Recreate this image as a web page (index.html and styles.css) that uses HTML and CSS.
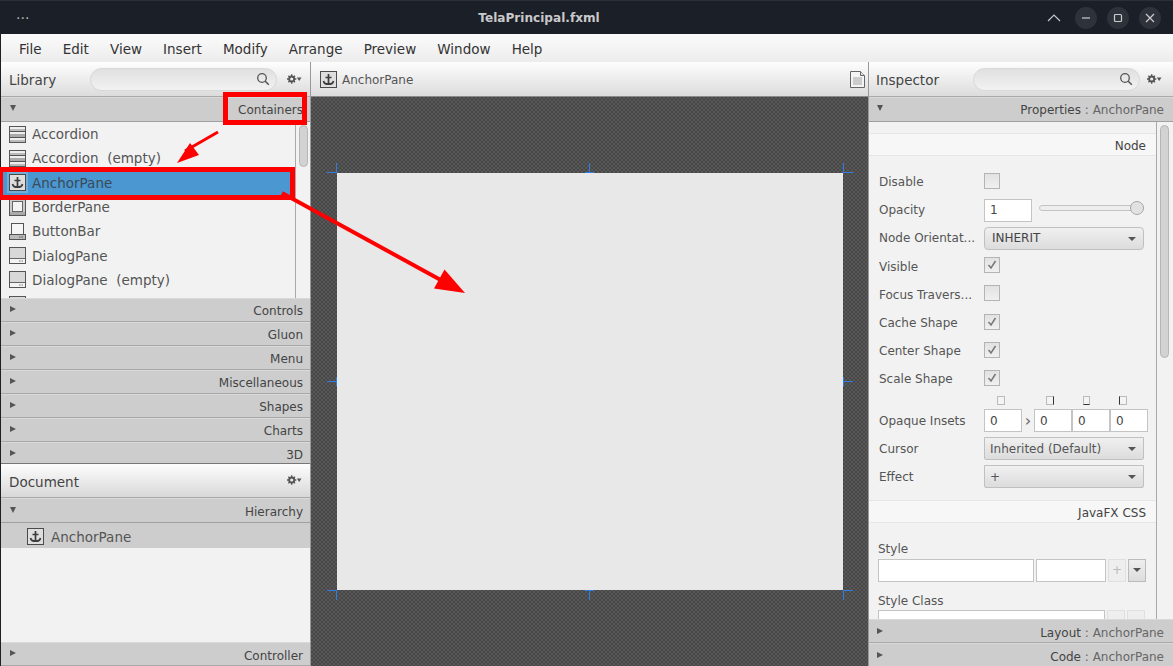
FILE: index.html
```html
<!DOCTYPE html>
<html lang="en">
<head>
<meta charset="utf-8">
<title>TelaPrincipal.fxml</title>
<link rel="stylesheet" href="styles.css">
</head>
<body>
<svg class="defs" width="0" height="0" aria-hidden="true">
  <defs>
    <g id="anchor">
      <rect x="0.5" y="0.5" width="16" height="16" fill="#dedede" stroke="#4a4a4a"/>
      <path d="M8.5 3v10M5.500 6.500h6M3.500 10c.5 2.500 2.500 3.200 5 3.200s4.500-.7 5-3.200" fill="none" stroke="#3c3c3c" stroke-width="1.700"/>
    </g>
    <g id="gear">
      <circle cx="5" cy="5" r="2.700" fill="none" stroke="#555" stroke-width="2"/>
      <path d="M5 0v2M5 8v2M0 5h2M8 5h2M1.500 1.500l1.400 1.400M7.100 7.100l1.400 1.400M1.500 8.500l1.400-1.400M7.100 2.900l1.400-1.400" stroke="#555" stroke-width="1.400"/>
      <path d="M10.500 3.500h5l-2.500 3.500z" fill="#555"/>
    </g>
    <g id="search">
      <circle cx="6" cy="6" r="4.300" fill="none" stroke="#555" stroke-width="1.300"/>
      <path d="M9.200 9.200l3.600 3.600" stroke="#555" stroke-width="1.600"/>
    </g>
    <g id="check">
      <path d="M4.500 8l2.500 3 4.500-7" fill="none" stroke="#777" stroke-width="1.500"/>
    </g>
    <g id="stack">
      <rect x="0.500" y="0.500" width="16" height="16" fill="#eee" stroke="#555"/>
      <rect x="1" y="3" width="15" height="2" fill="#bbb"/>
      <rect x="1" y="8" width="15" height="3" fill="#aaa"/>
      <rect x="1" y="14" width="15" height="2" fill="#bbb"/>
      <path d="M1 5.500h15M1 11.500h15" stroke="#555" fill="none"/>
    </g>
    <g id="border">
      <rect x="0.500" y="0.500" width="16" height="16" fill="#ccc" stroke="#555"/>
      <rect x="3.500" y="2.500" width="10" height="10" fill="#f4f4f4" stroke="#666"/>
      <rect x="1" y="13" width="15" height="3" fill="#aaa"/>
    </g>
    <g id="bar">
      <rect x="2.500" y="0.500" width="12" height="11" fill="#f6f6f6" stroke="#555"/>
      <rect x="0.500" y="11.500" width="16" height="5" fill="#bbb" stroke="#555"/>
      <path d="M10 14h1.500M12.500 14H14" stroke="#555"/>
    </g>
    <g id="dialog">
      <rect x="0.500" y="0.500" width="16" height="16" fill="#d8d8d8" stroke="#555"/>
      <rect x="1" y="12" width="15" height="4" fill="#f4f4f4"/>
      <path d="M1 11.500h15" stroke="#666"/>
      <path d="M10 14h1.500M12.500 14H14" stroke="#777"/>
    </g>
  </defs>
</svg>

<div class="app">
  <header class="titlebar">
    <span class="dots">···</span>
    <span class="wintitle">TelaPrincipal.fxml</span>
    <div class="winbtns">
      <svg class="chev" width="14" height="8" viewBox="0 0 14 8"><path d="M1 7l6-6 6 6" fill="none" stroke="#c8c8c8" stroke-width="1.200"/></svg>
      <span class="wbtn"><svg width="10" height="10" viewBox="0 0 10 10"><path d="M1 5h8" stroke="#ccc" stroke-width="1.200"/></svg></span>
      <span class="wbtn"><svg width="10" height="10" viewBox="0 0 10 10"><rect x="1.500" y="1.500" width="7" height="7" rx="1" fill="none" stroke="#ccc" stroke-width="1.200"/></svg></span>
      <span class="wbtn"><svg width="10" height="10" viewBox="0 0 10 10"><path d="M1 1l8 8M9 1l-8 8" stroke="#ccc" stroke-width="1.200"/></svg></span>
    </div>
  </header>

  <nav class="menubar">
    <span>File</span><span>Edit</span><span>View</span><span>Insert</span><span>Modify</span><span>Arrange</span><span>Preview</span><span>Window</span><span>Help</span>
  </nav>

  <main class="workspace">
    <aside class="left">
      <div class="panelhead">
        <span class="paneltitle">Library</span>
        <div class="searchbox"><svg width="14" height="14" viewBox="0 0 14 14"><use href="#search"/></svg></div>
        <svg class="gear" width="15" height="10" viewBox="0 0 16 10"><use href="#gear"/></svg>
      </div>
      <div class="acc open"><span class="tri down"></span><span class="acclabel">Containers</span></div>
      <div class="liblist">
        <div class="libitems">
          <div class="libitem"><svg width="17" height="17" viewBox="0 0 17 17"><use href="#stack"/></svg><span>Accordion</span></div>
          <div class="libitem"><svg width="17" height="17" viewBox="0 0 17 17"><use href="#stack"/></svg><span>Accordion&nbsp; (empty)</span></div>
          <div class="libitem selected"><svg width="17" height="17" viewBox="0 0 17 17"><use href="#anchor"/></svg><span>AnchorPane</span></div>
          <div class="libitem"><svg width="17" height="17" viewBox="0 0 17 17"><use href="#border"/></svg><span>BorderPane</span></div>
          <div class="libitem"><svg width="17" height="17" viewBox="0 0 17 17"><use href="#bar"/></svg><span>ButtonBar</span></div>
          <div class="libitem"><svg width="17" height="17" viewBox="0 0 17 17"><use href="#dialog"/></svg><span>DialogPane</span></div>
          <div class="libitem"><svg width="17" height="17" viewBox="0 0 17 17"><use href="#dialog"/></svg><span>DialogPane&nbsp; (empty)</span></div>
          <div class="libitem"><svg width="17" height="17" viewBox="0 0 17 17"><use href="#dialog"/></svg></div>
        </div>
        <div class="vscroll"><span class="thumb"></span></div>
      </div>
      <div class="acc"><span class="tri"></span><span class="acclabel">Controls</span></div>
      <div class="acc"><span class="tri"></span><span class="acclabel">Gluon</span></div>
      <div class="acc"><span class="tri"></span><span class="acclabel">Menu</span></div>
      <div class="acc"><span class="tri"></span><span class="acclabel">Miscellaneous</span></div>
      <div class="acc"><span class="tri"></span><span class="acclabel">Shapes</span></div>
      <div class="acc"><span class="tri"></span><span class="acclabel">Charts</span></div>
      <div class="acc short"><span class="tri"></span><span class="acclabel">3D</span></div>
      <div class="panelhead dochead">
        <span class="paneltitle">Document</span>
        <svg class="gear" width="15" height="10" viewBox="0 0 16 10"><use href="#gear"/></svg>
      </div>
      <div class="acc open hier"><span class="tri down"></span><span class="acclabel">Hierarchy</span></div>
      <div class="tree">
        <div class="treerow"><svg width="17" height="17" viewBox="0 0 17 17"><use href="#anchor"/></svg><span>AnchorPane</span></div>
      </div>
      <div class="acc foot"><span class="tri"></span><span class="acclabel">Controller</span></div>
    </aside>

    <section class="center">
      <div class="crumbs">
        <svg width="17" height="17" viewBox="0 0 17 17"><use href="#anchor"/></svg>
        <span class="crumb">AnchorPane</span>
        <svg class="docicon" width="15" height="17" viewBox="0 0 15 17"><path d="M.5.500h10l4 4v12H.5z" fill="#f4f4f4" stroke="#666"/><path d="M10.500.500v4h4" fill="#ddd" stroke="#666"/><rect x="3" y="6" width="9" height="8" fill="#ccc"/></svg>
      </div>
      <div class="stage">
        <div class="canvas">
          <i class="tick tl"></i><i class="tick tr"></i><i class="tick bl"></i><i class="tick br"></i>
          <i class="tick tm"></i><i class="tick bm"></i><i class="tick lm"></i><i class="tick rm"></i>
        </div>
      </div>
    </section>

    <aside class="right">
      <div class="panelhead insphead">
        <span class="paneltitle">Inspector</span>
        <div class="searchbox insp"><svg width="14" height="14" viewBox="0 0 14 14"><use href="#search"/></svg></div>
        <svg class="gear" width="15" height="10" viewBox="0 0 16 10"><use href="#gear"/></svg>
      </div>
      <div class="acc open"><span class="tri down"></span><span class="acclabel">Properties<em> : AnchorPane</em></span></div>
      <div class="props">
        <div class="propscroll">
          <div class="sechead">Node</div>
          <div class="grid">
            <label>Disable</label><div><span class="cb"></span></div>
            <label>Opacity</label><div class="opacity"><span class="field short">1</span><span class="slider"><i></i></span></div>
            <label>Node Orientat...</label><div><span class="select up">INHERIT<b></b></span></div>
            <label>Visible</label><div><span class="cb"><svg width="16" height="16" viewBox="0 0 16 16"><use href="#check"/></svg></span></div>
            <label>Focus Travers...</label><div><span class="cb"></span></div>
            <label>Cache Shape</label><div><span class="cb"><svg width="16" height="16" viewBox="0 0 16 16"><use href="#check"/></svg></span></div>
            <label>Center Shape</label><div><span class="cb"><svg width="16" height="16" viewBox="0 0 16 16"><use href="#check"/></svg></span></div>
            <label>Scale Shape</label><div><span class="cb"><svg width="16" height="16" viewBox="0 0 16 16"><use href="#check"/></svg></span></div>
          </div>
          <div class="insets">
            <div class="insetmarks"><i class="im t"></i><i class="im r"></i><i class="im b"></i><i class="im l"></i></div>
            <div class="insetrow">
              <label>Opaque Insets</label>
              <div class="insetfields"><span class="field">0</span><span class="gt">›</span><span class="field">0</span><span class="field">0</span><span class="field">0</span></div>
            </div>
          </div>
          <div class="grid lower">
            <label>Cursor</label><div><span class="select">Inherited (Default)<b></b></span></div>
            <label>Effect</label><div><span class="select">+<b></b></span></div>
          </div>
          <div class="sechead css">JavaFX CSS</div>
          <div class="cssblock">
            <label>Style</label>
            <div class="cssrow"><span class="cssfield wide"></span><span class="cssfield"></span><span class="mini off">+</span><span class="mini"><b></b></span></div>
            <label class="stylecls">Style Class</label>
            <div class="cssrow"><span class="cssfield wider"></span><span class="mini off"></span><span class="mini off"></span></div>
          </div>
        </div>
        <div class="vscroll"><span class="thumb"></span></div>
      </div>
      <div class="acc"><span class="tri"></span><span class="acclabel">Layout<em> : AnchorPane</em></span></div>
      <div class="acc last"><span class="tri"></span><span class="acclabel">Code<em> : AnchorPane</em></span></div>
    </aside>
  </main>

  <svg class="marks" width="1173" height="666" viewBox="0 0 1173 666" aria-hidden="true">
    <rect x="225.500" y="94.500" width="79" height="28" fill="none" stroke="#f00" stroke-width="5"/>
    <rect x="0.500" y="169.500" width="292" height="28" fill="none" stroke="#f00" stroke-width="5"/>
    <path d="M218 132L185 151" stroke="#f00" stroke-width="3"/>
    <path d="M177 163l13-20 9 12z" fill="#f00"/>
    <path d="M282 193L448 284" stroke="#f00" stroke-width="4"/>
    <path d="M465 293l-31-4.500 10.500-19z" fill="#f00"/>
  </svg>
</div>
</body>
</html>
```
FILE: styles.css
```css
* { box-sizing: border-box; }
html, body { margin: 0; padding: 0; }
body { font-family: "DejaVu Sans", sans-serif; color: #444; background: #1b1f27; }
.defs { position: absolute; }
.app { position: relative; width: 1173px; height: 666px; overflow: hidden; display: flex; flex-direction: column; }
.marks { position: absolute; left: 0; top: 0; pointer-events: none; }

.titlebar { height: 34px; flex: none; background: #1b1f27; display: flex; align-items: center; position: relative; padding: 0 12px 0 16px; border-top: 1px solid #2b2f36; }
.dots { color: #b8b8b8; font-size: 14px; }
.wintitle { position: absolute; left: 0; right: 95px; text-align: center; color: #c9c9cb; font-weight: bold; font-size: 12.100px; }
.winbtns { margin-left: auto; display: flex; align-items: center; gap: 10px; position: relative; }
.chev { margin-right: 4px; }
.wbtn { width: 22px; height: 22px; border-radius: 50%; background: #2e323a; display: flex; align-items: center; justify-content: center; }

.menubar { height: 28px; flex: none; background: linear-gradient(#fbfbfb, #ececec); display: flex; align-items: center; padding: 1px 0 0 18px; gap: 21.100px; font-size: 13.500px; color: #333; margin-left: 1px; }

.workspace { flex: 1; display: flex; min-height: 0; background: #f2f2f2; margin-left: 1px; }
.left { width: 310px; flex: none; display: flex; flex-direction: column; border-right: 1px solid #999; background: #f2f2f2; }
.right { flex: 1; min-width: 0; display: flex; flex-direction: column; border-left: 1px solid #999; background: #f2f2f2; }
.center { width: 557px; flex: none; display: flex; flex-direction: column; }

.panelhead { height: 35px; flex: none; display: flex; align-items: center; padding: 0 8px; background: linear-gradient(#fefefe, #dcdcdc); border-bottom: 1px solid #aaa; }
.insphead { padding: 0 11px 0 7px; }
.paneltitle { font-size: 13.500px; color: #444; margin-top: 2px; }
.searchbox { margin-left: auto; width: 187px; height: 23px; border: 1px solid #d8d8d8; border-radius: 12px; background: linear-gradient(#e0e0e0, #f2f2f2); display: flex; align-items: center; justify-content: flex-end; padding-right: 6px; }
.searchbox.insp { width: 167px; }
.gear { margin-left: 10px; flex: none; }
.insphead .gear { margin-left: 7px; }
.dochead { height: 34px; justify-content: space-between; background: linear-gradient(#fdfdfd, #d8d8d8); }
.dochead .gear { margin-top: -2px; }

.acc { height: 24px; flex: none; display: flex; align-items: center; justify-content: space-between; padding: 2px 7px 0 9px; background: #cdcdcd; border-bottom: 1px solid #a8a8a8; border-top: 1px solid #d9d9d9; font-size: 12px; }
.acc.open { height: 25px; padding-top: 0; border-bottom: 1px solid #a0a0a0; }
.acc.hier { padding-top: 2px; }
.acc.short { height: 22px; padding-top: 4px; border-bottom-color: #777; }
.acc.foot { padding-top: 3px; }
.acc.last { height: 23px; border-bottom: 0; }
.right .acc { padding-left: 8px; padding-right: 9px; }
.right .acc:not(.open) { padding-top: 4px; }
.acclabel em { font-style: normal; color: #666; }
.tri { width: 0; height: 0; border-style: solid; border-width: 3.500px 0 3.500px 6px; border-color: transparent transparent transparent #555; margin-top: -5px; }
.tri.down { border-width: 6px 3.500px 0; border-color: #555 transparent transparent; margin-top: -3px; }

.liblist { height: 176px; flex: none; display: flex; overflow: hidden; }
.libitems { flex: 1; min-width: 0; border-right: 1px solid #aaa; }
.libitem { height: 24.300px; display: flex; align-items: center; gap: 6px; padding-left: 8px; font-size: 13.500px; color: #555; }
.libitem svg { flex: none; }
.libitem.selected { background: #4a97d1; color: #3b4a55; }
.libitem.selected svg { box-shadow: 0 0 0 2px rgba(190, 215, 235, .35); }
.vscroll { width: 14px; flex: none; padding: 3px 2px 0 3px; }
.thumb { display: block; width: 9px; height: 42px; border-radius: 5px; background: #d2d2d2; border: 1px solid #b5b5b5; }

.tree { flex: 1; min-height: 0; background: #f2f2f2; }
.treerow { height: 25px; background: #cdcdcd; display: flex; align-items: center; gap: 7px; padding: 2px 0 0 26px; font-size: 13.500px; color: #555; }

.crumbs { height: 35px; flex: none; display: flex; align-items: center; gap: 5px; padding: 0 3px 0 9px; background: linear-gradient(#fdfdfd, #dcdcdc); border-bottom: 1px solid #8a8a8a; }
.crumb { font-size: 12px; color: #555; margin-top: 2px; }
.docicon { margin-left: auto; }
.stage { flex: 1; min-height: 0; display: flex; align-items: center; justify-content: center; background-color: #525252; background-image: repeating-conic-gradient(#474747 0 25%, #585858 0 50%); background-size: 4px 4px; padding-left: 1px; }
.canvas { width: 506px; height: 417px; background: #e8e8e8; position: relative; }
.tick { position: absolute; display: block; width: 10px; height: 10px; border: 0 solid #2f7de0; }
.tl { left: -10px; top: -10px; border-right-width: 1px; border-bottom-width: 1px; }
.tr { right: -10px; top: -10px; border-left-width: 1px; border-bottom-width: 1px; }
.bl { left: -10px; bottom: -10px; border-right-width: 1px; border-top-width: 1px; }
.br { right: -10px; bottom: -10px; border-left-width: 1px; border-top-width: 1px; }
.tm, .bm { left: 248px; width: 9px; background: linear-gradient(#2f7de0, #2f7de0) center / 1px 100% no-repeat; }
.tm { top: -10px; border-bottom-width: 1px; }
.bm { bottom: -10px; border-top-width: 1px; }
.lm, .rm { top: 204px; height: 9px; background: linear-gradient(#2f7de0, #2f7de0) center / 100% 1px no-repeat; }
.lm { left: -10px; border-right-width: 1px; }
.rm { right: -10px; border-left-width: 1px; }

.props { flex: 1; min-height: 0; display: flex; overflow: hidden; }
.propscroll { flex: 1; min-width: 0; border-right: 1px solid #aaa; padding-top: 11px; overflow: hidden; }
.props .vscroll { width: 16px; padding: 3px 0 0 3px; }
.props .thumb { width: 9px; height: 233px; }
.sechead { height: 23px; background: #f7f7f7; border-top: 1px solid #e6e6e6; border-bottom: 1px solid #e6e6e6; text-align: right; padding: 5px 10px 0 0; font-size: 12px; color: #444; }
.sechead.css { margin-top: 9px; }
.grid { display: grid; grid-template-columns: 105px 165px; grid-auto-rows: 28.200px; align-items: center; padding: 12px 0 0 10px; font-size: 12px; }
.grid label, .insetrow label, .cssblock label { color: #555; font-size: 12px; }
.grid.lower { padding-top: 0; }
.grid > div { display: flex; align-items: center; height: 100%; }
.cb { width: 16px; height: 16px; border: 1px solid #b4b4b4; background: linear-gradient(#e2e2e2, #f0f0f0); display: block; margin-top: -3px; }
.cb svg { display: block; margin: -1px; }
.field { height: 23px; width: 38px; border: 1px solid #c4c4c4; background: #fff; display: flex; align-items: center; padding-left: 5px; font-size: 12px; color: #444; flex: none; }
.field.short { width: 48px; padding-left: 5px; }
.opacity { gap: 7px; }
.slider { width: 105px; height: 6px; background: #ededed; border: 1px solid #c4c4c4; border-radius: 3px; position: relative; margin-top: -5px; }
.slider i { position: absolute; right: -1px; top: -5px; width: 14px; height: 14px; border-radius: 50%; background: #e2e2e2; border: 1px solid #a8a8a8; }
.select { width: 160px; height: 23px; border: 1px solid #c0c0c0; background: linear-gradient(#f0f0f0, #dcdcdc); display: flex; align-items: center; padding-left: 5px; font-size: 12px; color: #555; position: relative; border-radius: 0 0 2px 2px; }
.select.up { padding-left: 7px; border-radius: 4px; color: #444; }
.select b { position: absolute; right: 7px; top: 9px; width: 0; height: 0; border-style: solid; border-width: 4px 4px 0; border-color: #555 transparent transparent; }
.insets { height: 45px; margin-top: -4px; padding-top: 3px; }
.insetmarks { display: flex; margin-left: 128px; height: 15px; align-items: center; }
.im { display: block; width: 9px; height: 9px; background: #f4f4f4; border: 1px solid #bbb; margin-right: 29px; }
.im.t { margin-right: 41px; }
.im.r { border-right-color: #333; }
.im.b { border-bottom-color: #333; }
.im.l { border-left-color: #333; }
.insetrow { display: flex; align-items: center; padding-left: 10px; height: 26px; }
.insetrow label { width: 105px; flex: none; }
.insetfields { display: flex; align-items: center; }
.gt { width: 12px; text-align: center; font-size: 16px; color: #666; }
.cssblock { padding: 19px 0 0 9px; display: flex; flex-direction: column; font-size: 12px; }
.cssblock label { height: 17px; }
.cssblock .stylecls { margin-top: 12px; height: 16px; }
.cssrow { display: flex; gap: 2px; height: 23px; }
.cssfield { width: 70px; height: 23px; background: #fff; border: 1px solid #c4c4c4; display: block; flex: none; }
.cssfield.wide { width: 156px; }
.cssfield.wider { width: 227px; }
.mini { width: 18px; height: 23px; border: 1px solid #bbb; background: linear-gradient(#eee, #ddd); position: relative; flex: none; display: flex; align-items: center; justify-content: center; color: #bbb; font-size: 12px; }
.mini.off { border-color: #e0e0e0; background: #eee; }
.mini b { width: 0; height: 0; border-style: solid; border-width: 4px 4px 0; border-color: #555 transparent transparent; }
```
